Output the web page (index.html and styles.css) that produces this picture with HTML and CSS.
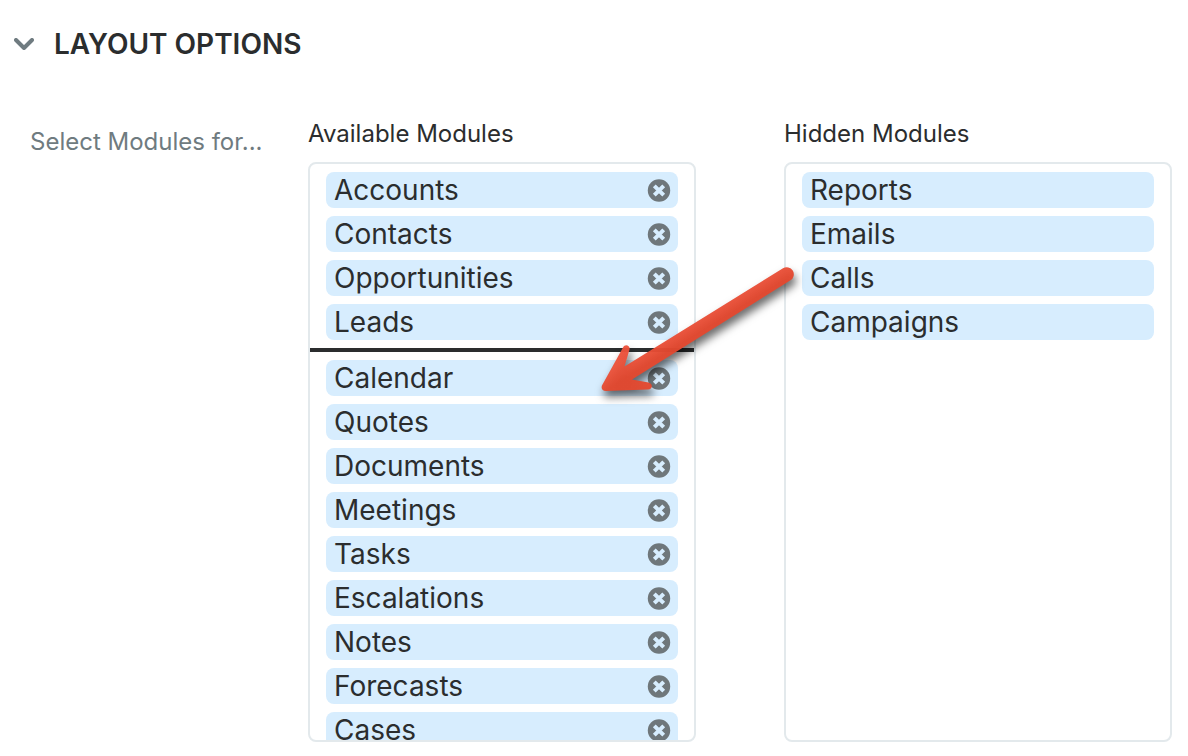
FILE: index.html
```html
<!DOCTYPE html>
<html lang="en">
<head>
    <meta charset="utf-8">
    <title>Layout Options</title>
    <link rel="stylesheet" href="styles.css">
</head>
<body>
    <svg class="sprite" aria-hidden="true">
        <symbol id="remove" viewBox="0 0 24 24">
            <circle cx="12" cy="12.5" r="11.2" fill="#6f777b"/>
            <path d="M7.300 7.800l9.400 9.400M16.700 7.800l-9.400 9.400" stroke="#d7edfe" stroke-width="4"/>
        </symbol>
    </svg>
    <h2 class="panel-title">
        <button class="toggle" aria-expanded="true">
            <svg class="chevron" viewBox="0 0 20 12"><path d="M2 2l8 8 8-8"/></svg>
            LAYOUT OPTIONS
        </button>
    </h2>
    <div class="panel-row">
        <div class="field-label">Select Modules for...</div>
        <div class="modules">
            <div class="column">
                <h3 id="availableTitle">Available Modules</h3>
                <ul class="list" aria-labelledby="availableTitle">
                    <li class="item">Accounts <button class="remove" aria-label="Remove Accounts"><svg><use href="#remove"/></svg></button></li>
                    <li class="item">Contacts <button class="remove" aria-label="Remove Contacts"><svg><use href="#remove"/></svg></button></li>
                    <li class="item">Opportunities <button class="remove" aria-label="Remove Opportunities"><svg><use href="#remove"/></svg></button></li>
                    <li class="item">Leads <button class="remove" aria-label="Remove Leads"><svg><use href="#remove"/></svg></button></li>
                    <li class="divider" role="separator"></li>
                    <li class="item">Calendar <button class="remove" aria-label="Remove Calendar"><svg><use href="#remove"/></svg></button></li>
                    <li class="item">Quotes <button class="remove" aria-label="Remove Quotes"><svg><use href="#remove"/></svg></button></li>
                    <li class="item">Documents <button class="remove" aria-label="Remove Documents"><svg><use href="#remove"/></svg></button></li>
                    <li class="item">Meetings <button class="remove" aria-label="Remove Meetings"><svg><use href="#remove"/></svg></button></li>
                    <li class="item">Tasks <button class="remove" aria-label="Remove Tasks"><svg><use href="#remove"/></svg></button></li>
                    <li class="item">Escalations <button class="remove" aria-label="Remove Escalations"><svg><use href="#remove"/></svg></button></li>
                    <li class="item">Notes <button class="remove" aria-label="Remove Notes"><svg><use href="#remove"/></svg></button></li>
                    <li class="item">Forecasts <button class="remove" aria-label="Remove Forecasts"><svg><use href="#remove"/></svg></button></li>
                    <li class="item">Cases <button class="remove" aria-label="Remove Cases"><svg><use href="#remove"/></svg></button></li>
                </ul>
            </div>
            <div class="column">
                <h3 id="hiddenTitle">Hidden Modules</h3>
                <ul class="list" aria-labelledby="hiddenTitle">
                    <li class="item">Reports</li>
                    <li class="item">Emails</li>
                    <li class="item">Calls</li>
                    <li class="item">Campaigns</li>
                </ul>
            </div>
            <svg class="arrow" viewBox="0 0 220 160" aria-hidden="true">
                <defs>
                    <linearGradient id="arrowFill" gradientUnits="userSpaceOnUse" x1="107" y1="61" x2="115" y2="74">
                        <stop offset="0" stop-color="#ec523b"/>
                        <stop offset="1" stop-color="#e3482f"/>
                    </linearGradient>
                </defs>
                <path fill="url(#arrowFill)" fill-opacity="0.96" d="M193 13.300 A7 7 0 0 1 200.500 25.300 L42 124.500 L58.500 127.600 C63.500 129 62.500 134.500 58 134.500 L16 136 C12 136 10.500 132.500 12.500 129.500 L33 92.500 C35 88.500 40.500 90.500 39.500 94.500 L34.500 111.500 Z"/>
            </svg>
        </div>
    </div>
</body>
</html>
```

FILE: styles.css
```css
* {
    box-sizing: border-box;
}
body {
    margin: 0;
    padding: 24px 16px 14px 14px;
    font-family: Inter, "Liberation Sans", sans-serif;
    background-color: white;
    color: #2b2d2e;
}
button {
    padding: 0;
    border: none;
    background: none;
    color: inherit;
    font: inherit;
    cursor: pointer;
}
.sprite {
    display: none;
}
.panel-title {
    margin: 0 0 54px;
    font-size: 28px;
    font-weight: 600;
    line-height: 40px;
}
.toggle {
    display: flex;
    align-items: center;
    gap: 20px;
}
.chevron {
    width: 20px;
    height: 12px;
    fill: none;
    stroke: #6f7b80;
    stroke-width: 4;
    stroke-linecap: round;
    stroke-linejoin: round;
}
.panel-row {
    display: flex;
}
.field-label {
    flex: none;
    width: 294px;
    padding: 8px 16px 0;
    font-size: 24px;
    line-height: 32px;
    color: #6f7b80;
}
.modules {
    position: relative;
    display: flex;
    flex: 1;
    gap: 88px;
}
.column {
    flex: 1;
    min-width: 0;
}
.column h3 {
    margin: 0 0 12px;
    font-size: 24px;
    font-weight: 400;
    line-height: 32px;
}
.list {
    display: flex;
    flex-direction: column;
    gap: 8px;
    height: 580px;
    margin: 0;
    padding: 8px 16px;
    border: 2px solid #e3e9ec;
    border-radius: 8px;
    list-style: none;
    overflow-y: auto;
    scrollbar-width: none;
}
.item {
    display: flex;
    flex: none;
    align-items: center;
    justify-content: space-between;
    height: 36px;
    padding: 0 7px 0 8px;
    border-radius: 8px;
    background-color: #d7edfe;
    font-size: 28px;
    line-height: 36px;
}
.remove,
.remove svg {
    display: block;
    width: 24px;
    height: 24px;
}
.divider {
    flex: none;
    height: 4px;
    margin: 0 -16px;
    background-color: #2b2d2e;
}
.arrow {
    position: absolute;
    top: 137px;
    left: 282px;
    width: 220px;
    height: 160px;
    overflow: visible;
    filter: drop-shadow(2px 6px 4px rgba(0, 0, 0, 0.6));
    pointer-events: none;
}
```
